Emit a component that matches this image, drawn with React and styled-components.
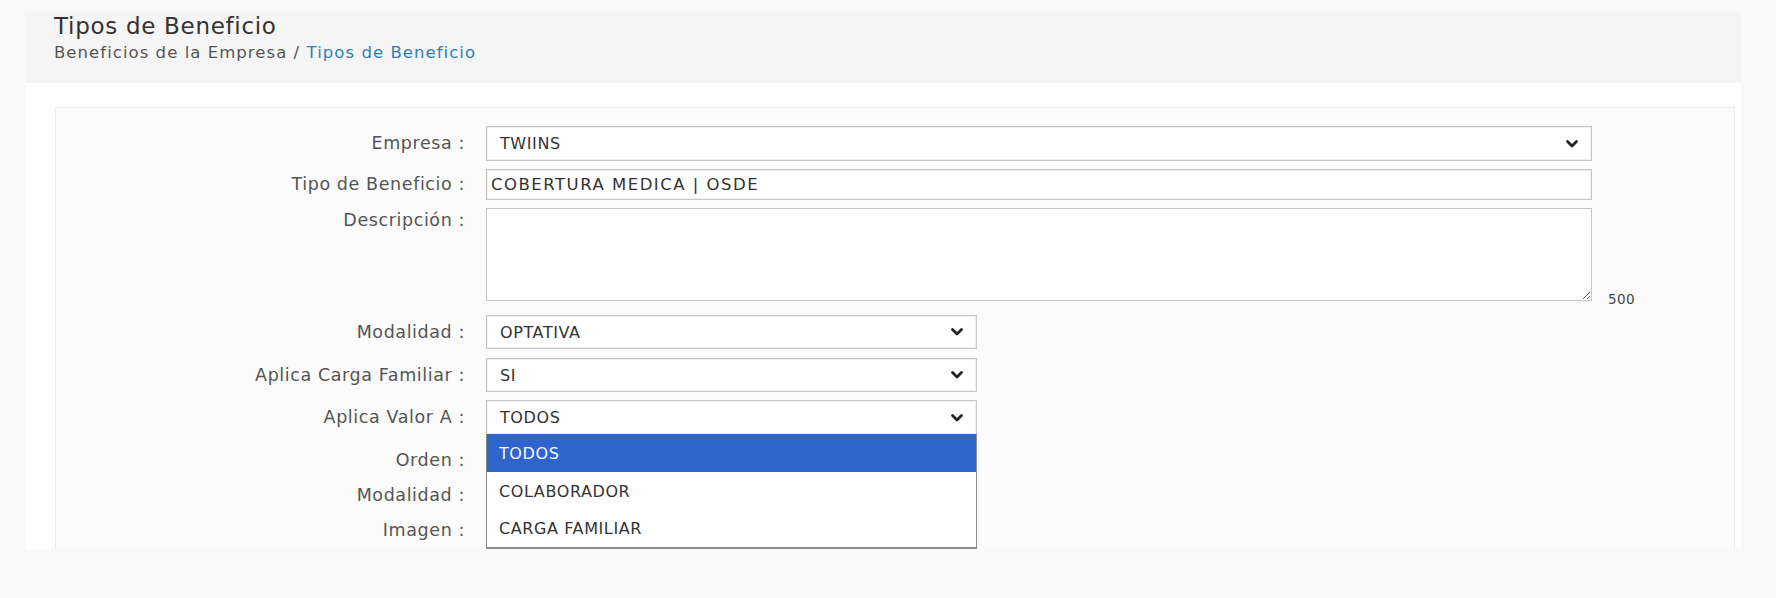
import styled, { createGlobalStyle } from "styled-components";

const GlobalStyle = createGlobalStyle`
  html, body {
    margin: 0;
    background: #f9f9f9;
  }
  body {
    font-family: "DejaVu Sans", Verdana, sans-serif;
    color: #555;
  }
`;

const Page = styled.div`
  padding: 12px 35px 0 25px;
`;

const Header = styled.header`
  height: 71px;
  box-sizing: border-box;
  background: #f5f5f5;
  padding: 0 29px;
`;

const Title = styled.h1`
  margin: 0;
  font-size: 23px;
  font-weight: 400;
  letter-spacing: 0.7px;
  line-height: 28px;
  color: #333;
`;

const Breadcrumb = styled.div`
  font-size: 16.5px;
  letter-spacing: 1.05px;
  line-height: 26px;
  color: #555;

  a {
    color: #2f7fb8;
    text-decoration: none;
  }
`;

const Content = styled.div`
  background: #fff;
  height: 466px;
  overflow: hidden;
  padding: 24px 6px 0 30px;
  box-sizing: border-box;
`;

const Panel = styled.div`
  border: 1px solid #ececec;
  background: #fbfbfb;
  padding-top: 18px;
  min-height: 600px;
`;

const Row = styled.div`
  display: flex;
  align-items: ${(p) => (p.$bottom ? "flex-end" : "flex-start")};
  margin-top: ${(p) => p.$mt || 0}px;
`;

const Label = styled.label`
  width: 409px;
  flex: none;
  margin-right: 21px;
  text-align: right;
  font-size: 17.5px;
  letter-spacing: 0.6px;
  line-height: ${(p) => p.$h || 34}px;
  color: #555;
  white-space: nowrap;
  align-self: flex-start;
`;

const Field = styled.div`
  position: relative;
  width: ${(p) => (p.$wide ? 1106 : 491)}px;
  height: ${(p) => p.$h}px;
  box-sizing: border-box;
  border: 1px solid #c6c6c6;
  box-shadow: inset 0 0 0 1px #f0f0f0;
  background: #fff;
  display: flex;
  align-items: center;
  font-size: ${(p) => (p.$select ? 16 : 16.5)}px;
  letter-spacing: ${(p) => (p.$select ? 0.6 : 1.5)}px;
  color: #333;
  padding: 0 ${(p) => (p.$select ? 13 : 4)}px;
`;

const Value = styled.span`
  flex: 1;
  white-space: nowrap;
`;

const Chevron = styled.svg`
  width: 14px;
  height: 10px;
  margin-right: -1px;
`;

const TextArea = styled.textarea`
  width: 1106px;
  height: 93px;
  box-sizing: border-box;
  border: 1px solid #c6c6c6;
  background: #fff;
  resize: both;
  font-family: inherit;
  font-size: 15px;
  padding: 4px;
  margin: 0;
  display: block;
`;

const Counter = styled.span`
  font-size: 13.5px;
  letter-spacing: 0.4px;
  color: #444;
  margin-left: 16px;
  margin-bottom: -6px;
`;

const Hidden = styled.div`
  width: 300px;
  height: 30px;
  border: 1px solid #c6c6c6;
  background: #fff;
  margin-top: 2px;
`;

const Options = styled.ul`
  position: absolute;
  top: 100%;
  left: -1px;
  right: -1px;
  margin: 0;
  padding: 0;
  list-style: none;
  background: #fff;
  border: 1px solid #8a8a8a;
  border-top: none;
  border-bottom-width: 2px;
  z-index: 5;
`;

const Option = styled.li`
  height: ${(p) => p.$h}px;
  display: flex;
  align-items: center;
  padding-left: 12px;
  font-size: 16px;
  letter-spacing: 0.6px;
  color: ${(p) => (p.$active ? "#f4f8ff" : "#333")};
  background: ${(p) => (p.$active ? "#2f64cb" : "#fff")};
`;

function Arrow() {
  return (
    <Chevron viewBox="0 0 14 10">
      <path
        d="M2.5 2.5 L7 7 L11.5 2.5"
        fill="none"
        stroke="#222"
        strokeWidth="2.8"
        strokeLinecap="round"
        strokeLinejoin="round"
      />
    </Chevron>
  );
}

function Select({ value, wide, h, children }) {
  return (
    <Field $select $wide={wide} $h={h}>
      <Value>{value}</Value>
      <Arrow />
      {children}
    </Field>
  );
}

export default function App() {
  return (
    <>
      <GlobalStyle />
      <Page>
        <Header>
          <Title>Tipos de Beneficio</Title>
          <Breadcrumb>
            Beneficios de la Empresa / <a href="#">Tipos de Beneficio</a>
          </Breadcrumb>
        </Header>
        <Content>
          <Panel>
            <Row>
              <Label $h={35}>Empresa :</Label>
              <Select value="TWIINS" wide h={35} />
            </Row>
            <Row $mt={8}>
              <Label $h={31}>Tipo de Beneficio :</Label>
              <Field $wide $h={31}>
                <Value>COBERTURA MEDICA | OSDE</Value>
              </Field>
            </Row>
            <Row $mt={8} $bottom>
              <Label $h={24}>Descripción :</Label>
              <TextArea />
              <Counter>500</Counter>
            </Row>
            <Row $mt={14}>
              <Label>Modalidad :</Label>
              <Select value="OPTATIVA" h={34} />
            </Row>
            <Row $mt={9}>
              <Label>Aplica Carga Familiar :</Label>
              <Select value="SI" h={34} />
            </Row>
            <Row $mt={8}>
              <Label $h={35}>Aplica Valor A :</Label>
              <Select value="TODOS" h={35}>
                <Options>
                  <Option $active $h={38}>TODOS</Option>
                  <Option $h={38}>COLABORADOR</Option>
                  <Option $h={37}>CARGA FAMILIAR</Option>
                </Options>
              </Select>
            </Row>
            <Row $mt={8}>
              <Label $h={35}>Orden :</Label>
              <Hidden />
            </Row>
            <Row>
              <Label $h={35}>Modalidad :</Label>
              <Hidden />
            </Row>
            <Row>
              <Label $h={35}>Imagen :</Label>
              <Hidden />
            </Row>
          </Panel>
        </Content>
      </Page>
    </>
  );
}
